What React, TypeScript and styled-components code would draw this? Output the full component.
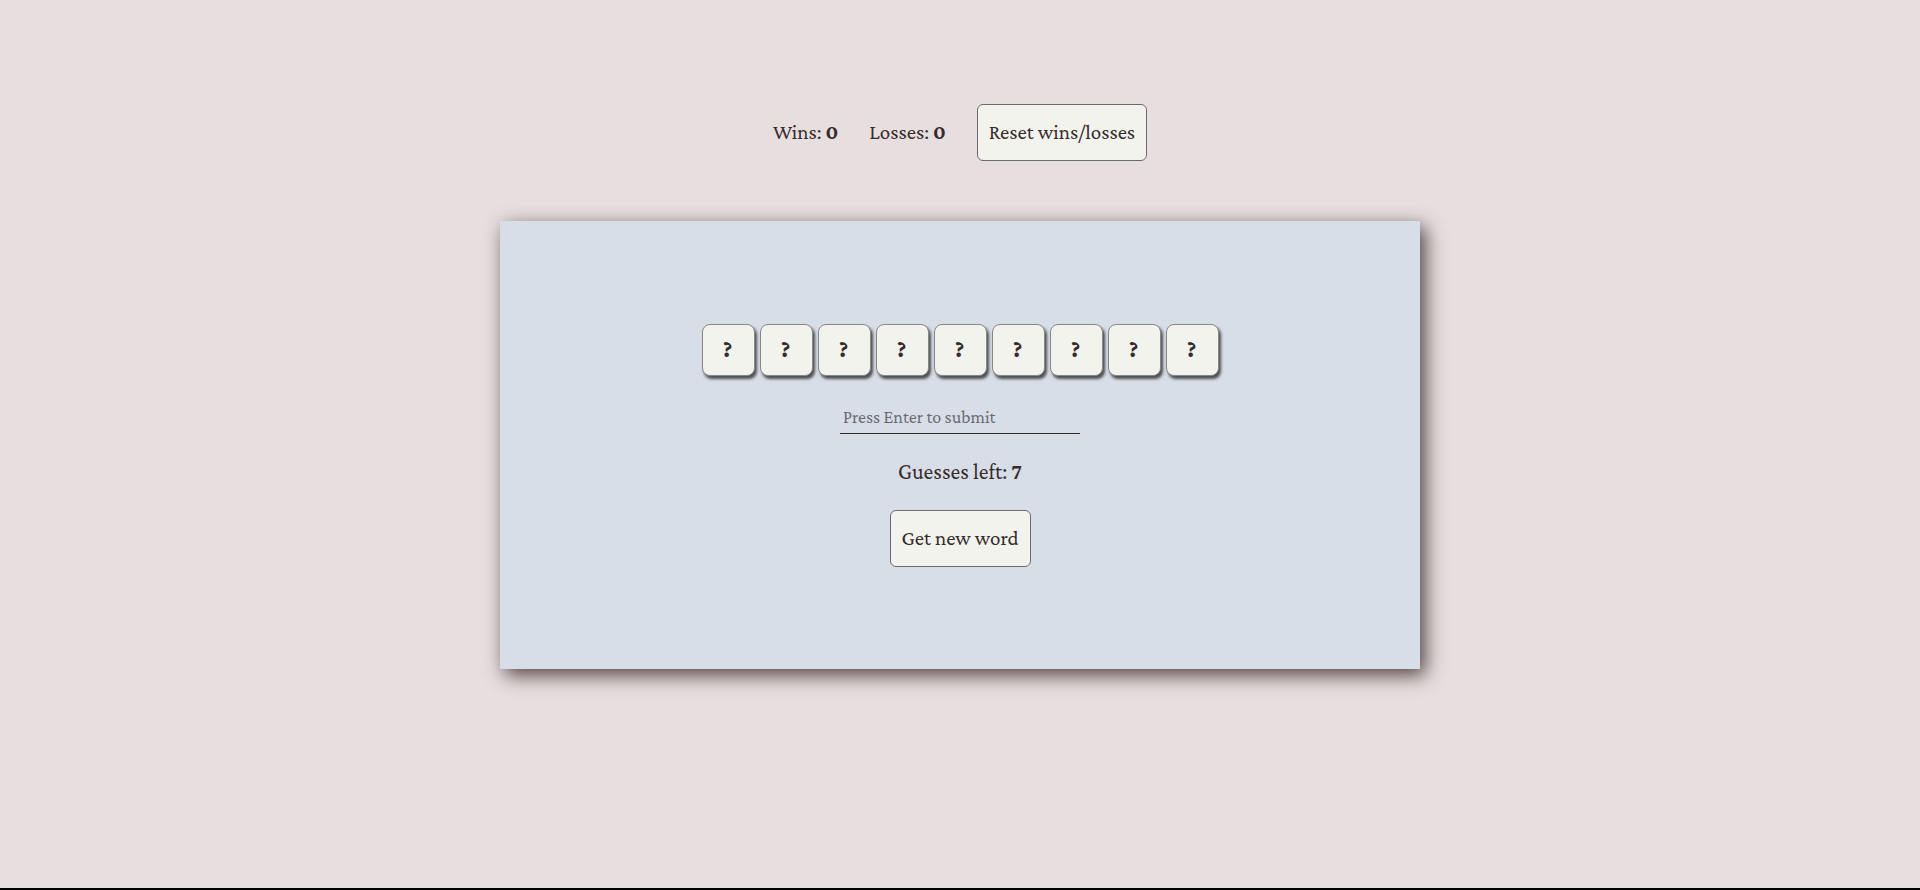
import React, { useState } from "react";
import styled, { createGlobalStyle } from "styled-components";

const GlobalStyle = createGlobalStyle`
  html, body {
    margin: 0;
    padding: 0;
    background: #e7dedf;
  }
  body {
    font-family: "Crimson Pro", "Liberation Serif", serif;
    color: #372b2b;
  }
`;

const Page = styled.div`
  min-height: 100vh;
  display: flex;
  flex-direction: column;
  box-sizing: border-box;
`;

const Main = styled.main`
  flex: 1;
  display: flex;
  flex-direction: column;
  align-items: center;
  padding-top: 104px;
`;

const Footer = styled.footer`
  height: 0;
  border-top: 2px solid #000;
`;

const ScoreBar = styled.div`
  display: flex;
  align-items: center;
  gap: 31px;
  font-size: 21px;
  line-height: 25px;
`;

const Stat = styled.span`
  white-space: nowrap;
`;

const Button = styled.button`
  font-family: "Crimson Pro", "Liberation Serif", serif;
  font-size: 21px;
  line-height: 25px;
  color: #372b2b;
  background: #f3f3ee;
  border: 1px solid #6f6a6a;
  border-radius: 6px;
  padding: 15px 11px;
  cursor: pointer;
`;

const Card = styled.section`
  margin-top: 60px;
  width: 920px;
  height: 448px;
  background: #d8dee8;
  box-shadow: 5px 6px 18px rgba(50, 30, 30, 0.82);
  display: flex;
  flex-direction: column;
  align-items: center;
  justify-content: center;
`;

const Tiles = styled.div`
  display: flex;
  gap: 5px;
`;

const Tile = styled.div`
  width: 53px;
  height: 52px;
  box-sizing: border-box;
  border: 1px solid #8a8686;
  border-radius: 8px;
  background: #f3f3ee;
  box-shadow: 2px 3px 3px rgba(20, 15, 15, 0.7);
  display: flex;
  align-items: center;
  justify-content: center;
  font-weight: 800;
  font-size: 22px;
`;

const GuessInput = styled.input`
  margin-top: 30px;
  width: 240px;
  height: 28px;
  box-sizing: border-box;
  border: none;
  border-bottom: 1px solid #372b2b;
  background: transparent;
  outline: none;
  padding: 0 3px 4px;
  font-family: "Crimson Pro", "Liberation Serif", serif;
  font-size: 18px;
  color: #372b2b;
  &::placeholder {
    color: #6b6a72;
  }
`;

const Guesses = styled.p`
  margin: 25px 0 0;
  font-size: 22px;
  line-height: 25px;
`;

const NewWordButton = styled(Button)`
  margin-top: 26px;
`;

export default function App() {
  const [wins, setWins] = useState(0);
  const [losses, setLosses] = useState(0);
  const [guess, setGuess] = useState("");
  const letters = Array.from({ length: 9 }, () => "?");

  return (
    <Page>
      <GlobalStyle />
      <Main>
        <ScoreBar>
          <Stat>
            Wins: <b>{wins}</b>
          </Stat>
          <Stat>
            Losses: <b>{losses}</b>
          </Stat>
          <Button
            onClick={() => {
              setWins(0);
              setLosses(0);
            }}
          >
            Reset wins/losses
          </Button>
        </ScoreBar>
        <Card>
          <Tiles>
            {letters.map((l, i) => (
              <Tile key={i}>{l}</Tile>
            ))}
          </Tiles>
          <GuessInput
            placeholder="Press Enter to submit"
            value={guess}
            onChange={(e) => setGuess(e.target.value)}
          />
          <Guesses>
            Guesses left: <b>7</b>
          </Guesses>
          <NewWordButton>Get new word</NewWordButton>
        </Card>
      </Main>
      <Footer />
    </Page>
  );
}
